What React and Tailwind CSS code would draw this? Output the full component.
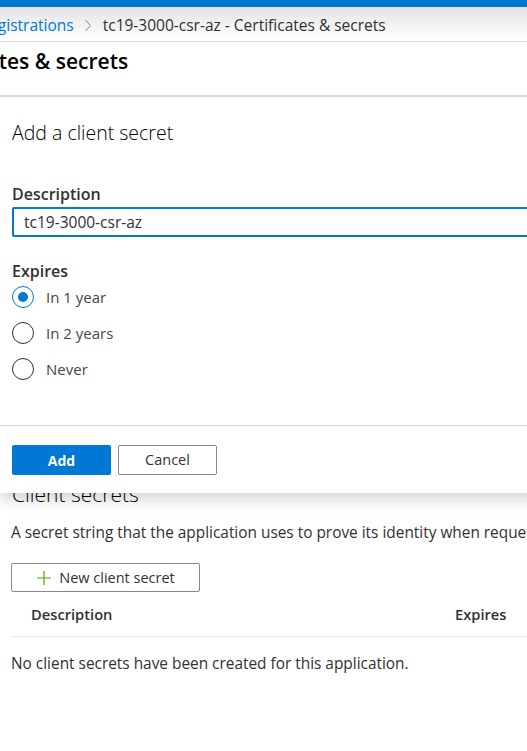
import React from 'react';

const font = { fontFamily: '"Open Sans", "Noto Sans", sans-serif' };

const Radio = ({ checked, label }) => (
  <div className="flex items-center h-[36px]">
    <div className={`w-[22px] h-[22px] rounded-full border flex items-center justify-center ${checked ? 'border-[#0078d4]' : 'border-[#323130]'}`}>
      {checked && <div className="w-[10px] h-[10px] rounded-full bg-[#0078d4]"></div>}
    </div>
    <span className="ml-[12px] text-[15px] text-[#484644]">{label}</span>
  </div>
);

const App = () => {
  return (
    <div className="relative w-[527px] h-[751px] overflow-hidden bg-white text-[#323130]" style={font}>
      {/* top bar */}
      <div className="h-[7px] bg-[#0078d4]"></div>

      {/* breadcrumb */}
      <div className="h-[35px] pt-[3px] flex items-center bg-gradient-to-b from-[#e4e4e4] to-white border-b border-[#dcdcdc] whitespace-nowrap text-[15.5px]">
        <span className="text-[#0078d4] -ml-[50px]">App registrations</span>
        <svg className="w-[8px] h-[13px] ml-[10px] mr-[11px]" viewBox="0 0 8 13" fill="none" stroke="#8a8886" strokeWidth="1">
          <path d="M1.5 1l5 5.5-5 5.5" />
        </svg>
        <span>tc19-3000-csr-az - Certificates &amp; secrets</span>
      </div>

      {/* title */}
      <div className="h-[55px] border-b-2 border-[#dedede] whitespace-nowrap">
        <h1 className="pt-[4px] text-[21px] font-semibold text-black -ml-[86px]">Certificates &amp; secrets</h1>
      </div>

      {/* page content behind the panel */}
      <div className="pt-[383px] pl-[11px]">
        <h2 className="text-[21px] font-light text-black ml-[1px] leading-[28px]">Client secrets</h2>
        <p className="mt-[14px] text-[15.4px] leading-[22px] whitespace-nowrap">A secret string that the application uses to prove its identity when requesting a token.</p>
        <button className="mt-[19px] w-[189px] h-[29px] border border-[#8a8886] rounded-[2px] flex items-center justify-center text-[14.5px]">
          <svg className="w-[16px] h-[16px] mr-[7px]" viewBox="0 0 16 16" fill="none" stroke="#57a300" strokeWidth="1.2">
            <path d="M8 1v14M1 8h14" />
          </svg>
          New client secret
        </button>
        <div className="mt-[8px] h-[37px] pb-[8px] flex items-center border-b border-[#edebe9] text-[14.7px] font-semibold">
          <span className="ml-[20px]">Description</span>
          <span className="ml-auto w-[72px]">Expires</span>
        </div>
        <p className="mt-[16px] text-[15.4px] leading-[22px]">No client secrets have been created for this application.</p>
      </div>

      {/* add client secret panel */}
      <div className="absolute left-0 top-[99px] w-[560px] h-[394px] bg-white shadow-[0_6px_14px_rgba(0,0,0,0.18)] flex flex-col">
        <div className="px-[12px] pt-[19px]">
          <div className="text-[19.5px] font-light text-black">Add a client secret</div>
          <div className="mt-[35px] text-[16px] font-semibold">Description</div>
          <div className="mt-[1px] h-[30px] border-2 border-[#0078d4] rounded-[2px] flex items-center pl-[10px] text-[15.5px]">tc19-3000-csr-az</div>
          <div className="mt-[22px] text-[16px] font-semibold">Expires</div>
          <div className="-mt-[4px]">
            <Radio checked label="In 1 year" />
            <Radio label="In 2 years" />
            <Radio label="Never" />
          </div>
        </div>
        <div className="mt-auto border-t border-[#d6d6d6] h-[68px] px-[12px] pt-[19px] flex gap-[7px]">
          <button className="w-[99px] h-[30px] bg-[#0078d4] rounded-[2px] text-white text-[14px] font-bold">Add</button>
          <button className="w-[99px] h-[30px] border border-[#8a8886] rounded-[2px] text-[14.5px]">Cancel</button>
        </div>
      </div>
    </div>
  );
};

export default App;
